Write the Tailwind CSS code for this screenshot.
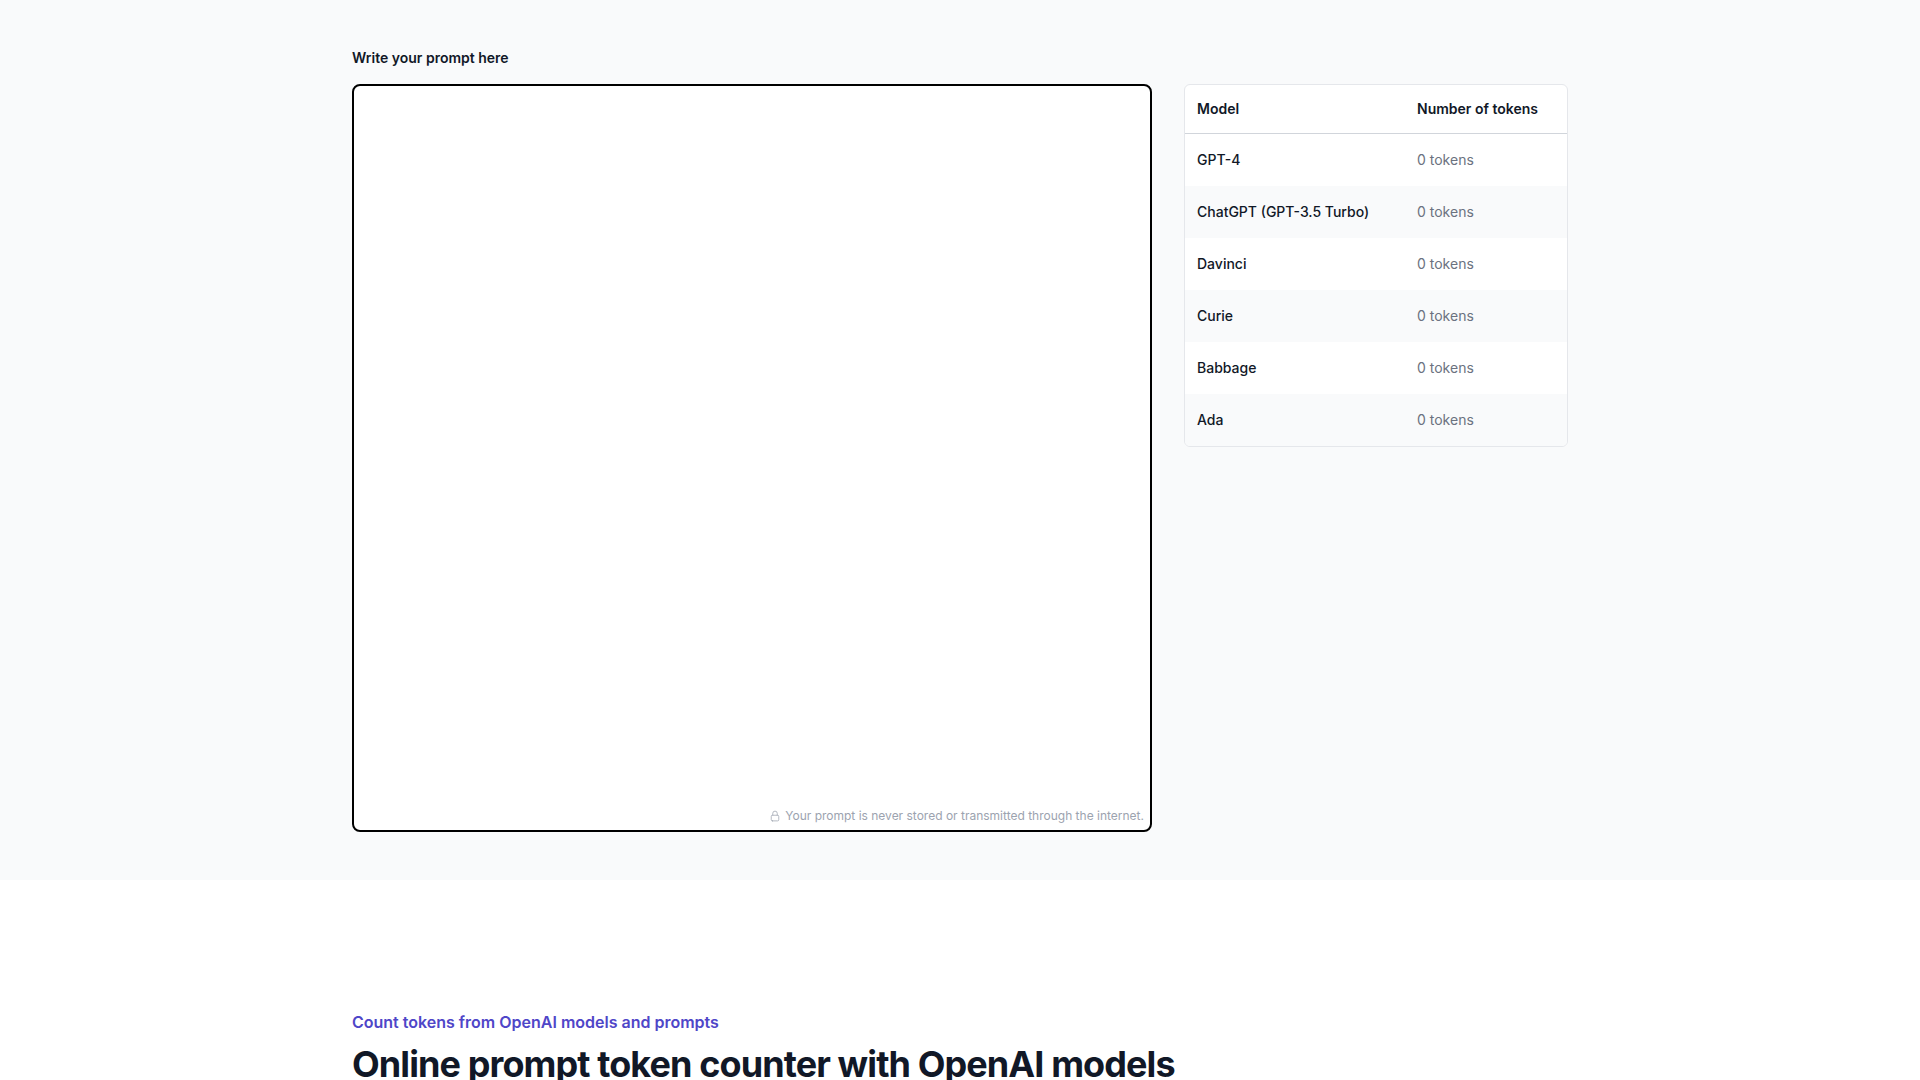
<!DOCTYPE html>
<html lang="en">

<head>
    <meta charset="UTF-8">
    <meta name="viewport" content="width=device-width, initial-scale=1.0">
    <title>Prompt token counter</title>
    <script src="https://cdn.jsdelivr.net/npm/@tailwindcss/browser@4"></script>
</head>

<body class="bg-white font-[Inter,sans-serif] text-[#111827] overflow-x-hidden">
    <!-- Counter -->
    <section class="bg-[#f9fafb] px-8 py-12">
        <div class="mx-auto max-w-[1216px]">
            <label for="prompt" class="block text-sm leading-5 font-semibold">Write your prompt here</label>
            <div class="mt-4 grid grid-cols-[minmax(0,800px)_minmax(0,384px)] gap-8 items-start">
                <div class="relative">
                    <textarea id="prompt" rows="31" class="block w-full resize-none rounded-lg border-2 border-black bg-white px-3 text-base leading-6 outline-none"></textarea>
                    <p class="absolute right-2 bottom-2 flex items-center gap-1 text-xs leading-4 text-[#9ca3af]">
                        <svg class="size-3" viewBox="0 0 24 24" fill="none" stroke="currentColor" stroke-width="1.5" stroke-linecap="round" stroke-linejoin="round" aria-hidden="true">
                            <path d="M16.5 10.5V6.75a4.5 4.5 0 1 0-9 0v3.75m-.75 11.25h10.5a2.25 2.25 0 0 0 2.25-2.25v-6.75a2.25 2.25 0 0 0-2.25-2.25H6.75a2.25 2.25 0 0 0-2.25 2.25v6.75a2.25 2.25 0 0 0 2.25 2.25Z" />
                        </svg>
                        Your prompt is never stored or transmitted through the internet.
                    </p>
                </div>

                <!-- Token counts -->
                <div class="overflow-hidden rounded-md border border-gray-200 bg-white">
                    <table class="w-full text-left text-sm leading-5">
                        <thead>
                            <tr class="border-b border-[#d1d5db]">
                                <th scope="col" class="w-[220px] px-3 py-[14px] font-semibold">Model</th>
                                <th scope="col" class="px-3 py-[14px] font-semibold">Number of tokens</th>
                            </tr>
                        </thead>
                        <tbody class="text-[#6b7280]">
                            <tr class="even:bg-[#f9fafb]">
                                <td class="px-3 py-4 font-medium text-[#111827]">GPT-4</td>
                                <td class="px-3 py-4">0 tokens</td>
                            </tr>
                            <tr class="even:bg-[#f9fafb]">
                                <td class="px-3 py-4 font-medium text-[#111827]">ChatGPT (GPT-3.5 Turbo)</td>
                                <td class="px-3 py-4">0 tokens</td>
                            </tr>
                            <tr class="even:bg-[#f9fafb]">
                                <td class="px-3 py-4 font-medium text-[#111827]">Davinci</td>
                                <td class="px-3 py-4">0 tokens</td>
                            </tr>
                            <tr class="even:bg-[#f9fafb]">
                                <td class="px-3 py-4 font-medium text-[#111827]">Curie</td>
                                <td class="px-3 py-4">0 tokens</td>
                            </tr>
                            <tr class="even:bg-[#f9fafb]">
                                <td class="px-3 py-4 font-medium text-[#111827]">Babbage</td>
                                <td class="px-3 py-4">0 tokens</td>
                            </tr>
                            <tr class="even:bg-[#f9fafb]">
                                <td class="px-3 py-4 font-medium text-[#111827]">Ada</td>
                                <td class="px-3 py-4">0 tokens</td>
                            </tr>
                        </tbody>
                    </table>
                </div>
            </div>
        </div>
    </section>

    <!-- About -->
    <section class="px-8 pt-32">
        <div class="mx-auto max-w-[1216px]">
            <p class="text-base leading-7 font-semibold text-[#4f46c8]">Count tokens from OpenAI models and prompts</p>
            <h1 class="mt-2 text-4xl leading-10 font-bold tracking-tight">Online prompt token counter with OpenAI models</h1>
        </div>
    </section>
</body>

</html>
